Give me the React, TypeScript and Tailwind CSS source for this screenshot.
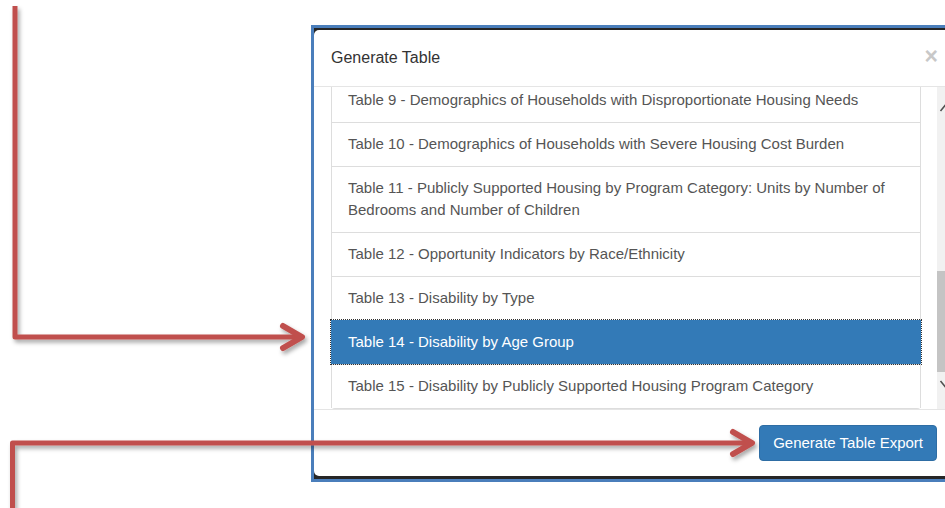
import React from 'react';

const tables = [
  'Table 9 - Demographics of Households with Disproportionate Housing Needs',
  'Table 10 - Demographics of Households with Severe Housing Cost Burden',
  'Table 11 - Publicly Supported Housing by Program Category: Units by Number of Bedrooms and Number of Children',
  'Table 12 - Opportunity Indicators by Race/Ethnicity',
  'Table 13 - Disability by Type',
  'Table 14 - Disability by Age Group',
  'Table 15 - Disability by Publicly Supported Housing Program Category',
];

const ACTIVE = 'Table 14 - Disability by Age Group';

function Scrollbar() {
  return (
    <div className="w-[17px] shrink-0 bg-[#f1f1f1] flex flex-col">
      <div className="h-[15px]" />
      {/* up arrow */}
      <svg width="17" height="12" viewBox="0 0 17 12" className="block">
        <path d="M3.5 9 L8.5 3 L13.5 9" fill="none" stroke="#505050" strokeWidth="1.6" />
      </svg>
      <div className="h-[157px]" />
      {/* thumb */}
      <div className="h-[101px] bg-[#c4c4c4]" />
      <div className="h-[7px]" />
      {/* down arrow */}
      <svg width="17" height="10" viewBox="0 0 17 10" className="block">
        <path d="M3.5 2 L8.5 8 L13.5 2" fill="none" stroke="#505050" strokeWidth="1.6" />
      </svg>
    </div>
  );
}

function Arrows() {
  return (
    <svg
      className="absolute inset-0 pointer-events-none"
      width="945"
      height="508"
      viewBox="0 0 945 508"
    >
      <defs>
        <filter id="arrow-shadow" x="-10%" y="-10%" width="120%" height="120%">
          <feDropShadow dx="2" dy="3" stdDeviation="2" floodColor="#000" floodOpacity="0.35" />
        </filter>
      </defs>
      <g filter="url(#arrow-shadow)" fill="none" stroke="#c0504d">
        {/* arrow to the selected row */}
        <path d="M15 6 V337 H299" strokeWidth="5" strokeLinejoin="round" />
        <path d="M283 326 L302 337 L283 348" strokeWidth="6" strokeLinecap="round" strokeLinejoin="round" />
        {/* arrow to the export button */}
        <path d="M12.5 510 V443 H748" strokeWidth="5" strokeLinejoin="round" />
        <path d="M733 432 L752 443 L733 454" strokeWidth="6" strokeLinecap="round" strokeLinejoin="round" />
      </g>
    </svg>
  );
}

export default function App() {
  return (
    <div className="relative w-[945px] h-[508px] overflow-hidden bg-white font-['Liberation_Sans',Arial,sans-serif]">
      <div className="pt-[25px] pl-[311px]">
        {/* screenshot frame */}
        <div className="w-[646px] border-[3px] border-[#4a7ebb] bg-[#262626] pt-[2px] pb-[3px]">
          <div className="w-[640px] bg-white rounded-[5px] flex flex-col">
            {/* Header */}
            <div className="h-[57px] border-b border-[#e5e5e5] px-[17px] flex items-center justify-between">
              <h2 className="text-[16px] leading-[22px] text-[#333]">Generate Table</h2>
              <span className="text-[23px] leading-none font-bold text-[#c8c8c8] -mr-[1px] mb-[4px]">×</span>
            </div>

            {/* Body */}
            <div className="h-[322px] overflow-hidden flex">
              <div className="flex-1 pl-[17px] pr-[16px]">
                <div className="-mt-[9px] border-b border-[#ddd] rounded-b-[4px]">
                  {tables.map((t) => {
                    const isActive = t === ACTIVE;
                    return (
                      <div
                        key={t}
                        className={`pt-[10px] pb-[11px] px-[16px] border-x border-t text-[15px] leading-[22px] ${
                          isActive
                            ? 'relative z-10 bg-[#337ab7] border-[#337ab7] text-white outline outline-dotted outline-[#333]'
                            : 'bg-white border-[#ddd] text-[#555]'
                        }`}
                      >
                        {t}
                      </div>
                    );
                  })}
                </div>
              </div>
              <Scrollbar />
            </div>

            {/* Footer */}
            <div className="h-[67px] border-t border-[#e5e5e5] flex items-center justify-end pr-[17px]">
              <button className="h-[36px] px-[13px] rounded-[4px] bg-[#337ab7] border border-[#2e6da4] text-white text-[15px] leading-[22px]">
                Generate Table Export
              </button>
            </div>
          </div>
        </div>
      </div>
      <Arrows />
    </div>
  );
}
